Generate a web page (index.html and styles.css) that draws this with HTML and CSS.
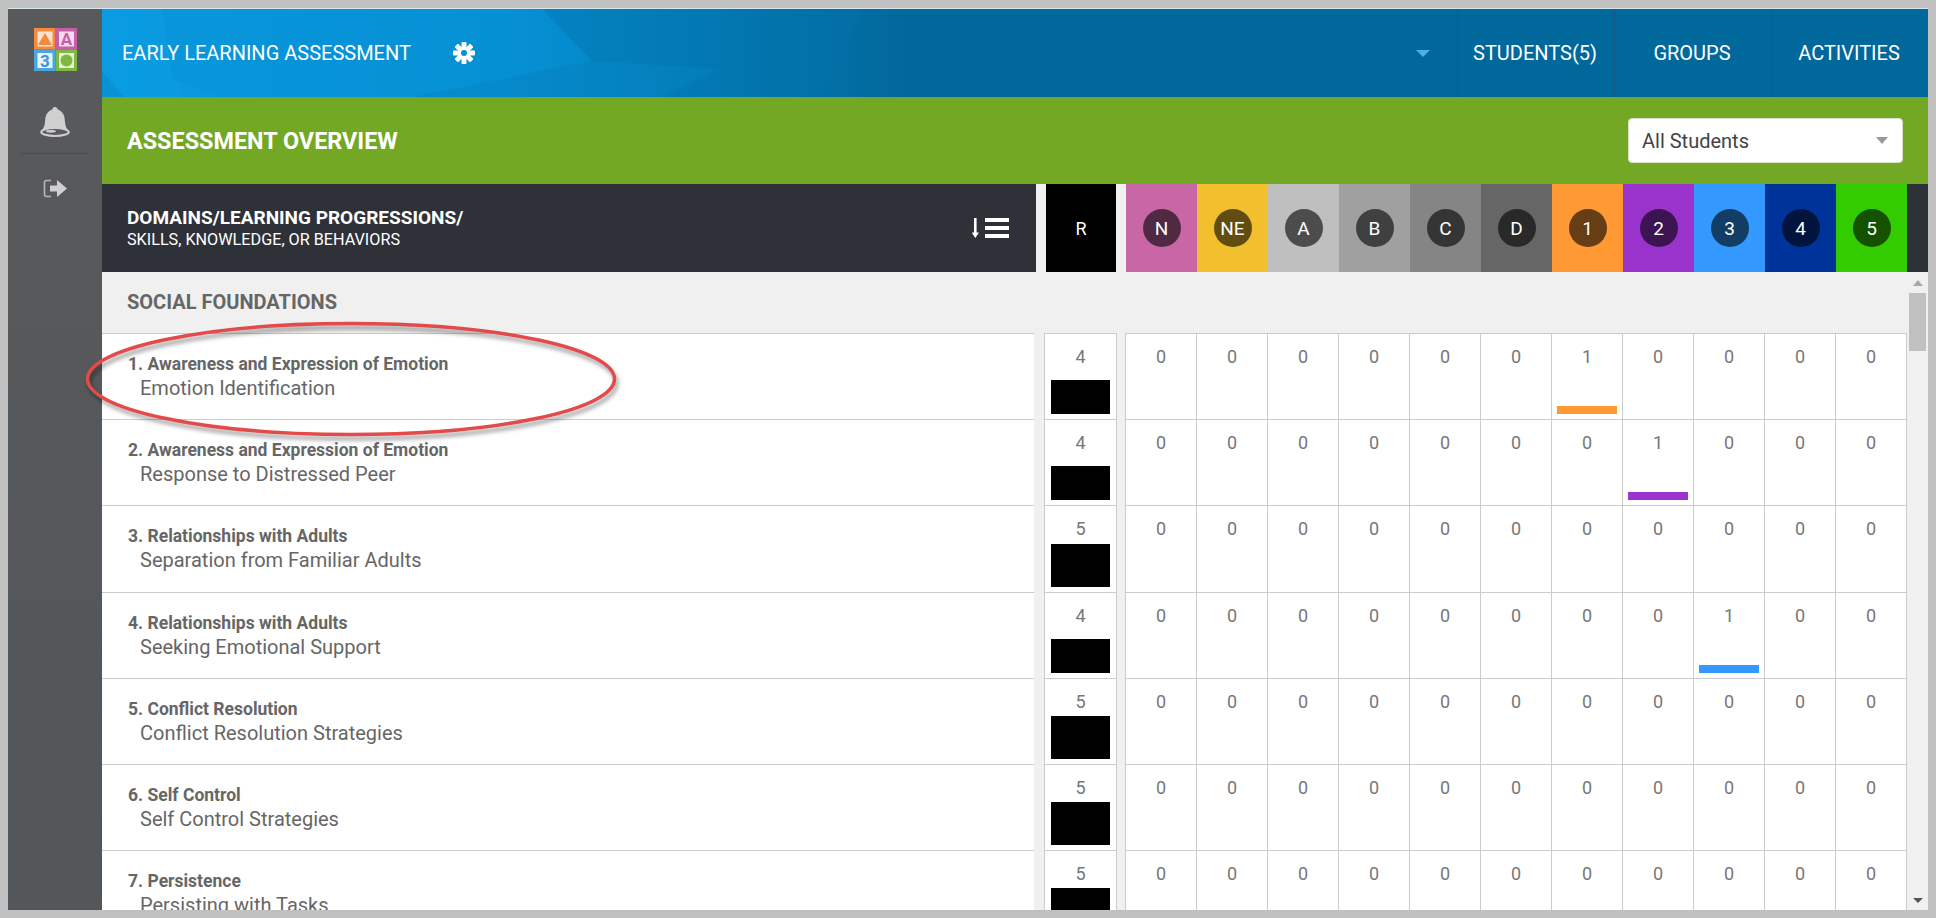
FILE: index.html
```html
<!DOCTYPE html>
<html lang="en">
<head>
    <meta charset="UTF-8">
    <meta name="viewport" content="width=device-width, initial-scale=1.0">
    <title>Early Learning Assessment</title>
    <link rel="stylesheet" href="styles.css">
</head>
<body>
    <div class="frame">
        <!-- Left rail -->
        <aside class="sidebar">
            <svg class="logo" viewBox="0 0 43 43">
                <rect x="0" y="0" width="21.5" height="21.5" fill="#f58a3f"/>
                <rect x="21.5" y="0" width="21.5" height="21.5" fill="#c65fa8"/>
                <rect x="0" y="21.5" width="21.5" height="21.5" fill="#4ba6de"/>
                <rect x="21.5" y="21.5" width="21.5" height="21.5" fill="#7eb843"/>
                <rect x="3.5" y="3.5" width="15" height="15" fill="#fbe3d2"/>
                <rect x="25" y="3.5" width="15" height="15" fill="#f4dcee"/>
                <rect x="3.5" y="25" width="15" height="15" fill="#e6f3fb"/>
                <rect x="25" y="25" width="15" height="15" fill="#e4f0d4"/>
                <polygon points="11,5 18,17 4,17" fill="#f58a3f"/>
                <text x="32.5" y="17" class="logo-letter" fill="#c65fa8">A</text>
                <text x="11" y="38.5" class="logo-letter" fill="#3b97d2">3</text>
                <circle cx="32.5" cy="32.5" r="6" fill="#7eb843"/>
            </svg>
            <svg class="bell" viewBox="0 0 30 30">
                <path d="M15 0c1.600 0 2.600 1 2.600 2.600C22 4 24.500 7.500 24.800 13c.3 5 1.200 8 4 11.500H1.200c2.800-3.500 3.700-6.500 4-11.500C5.500 7.500 8 4 12.400 2.600 12.400 1 13.400 0 15 0z" fill="#cfcfcf"/>
                <ellipse cx="15" cy="25" rx="13.800" ry="4" fill="#5a5c5e" stroke="#cfcfcf" stroke-width="2"/>
                <ellipse cx="11" cy="24.300" rx="5" ry="1.400" fill="#cfcfcf"/>
            </svg>
            <div class="rail-divider"></div>
            <svg class="signout" viewBox="0 0 24 19">
                <path d="M8 1.500H3.500C2.300 1.500 1.500 2.300 1.500 3.500v12c0 1.200.8 2 2 2H8" fill="none" stroke="#b4b6b7" stroke-width="1.600"/>
                <path d="M7 6.500h7V1l10 8.500L14 18v-5.500H7z" fill="#d0d0d0"/>
            </svg>
        </aside>

        <main class="content">
            <!-- Top bar -->
            <header class="topbar">
                <svg class="topbar-facets" viewBox="0 0 1826 88" preserveAspectRatio="none">
                    <polygon points="0,0 74,0 80,88 0,88" fill="#0a9fe6"/>
                    <polygon points="0,62 22,88 0,88" fill="#0786c4"/>
                    <polygon points="190,0 440,0 490,52 300,88 120,88 70,70 60,0" fill="#0792d6"/>
                    <polygon points="310,88 490,52 620,60 560,88" fill="#0581bd"/>
                    <polygon points="440,0 760,0 720,88 560,88 620,60 490,52" fill="#0273aa"/>
                </svg>
                <span class="app-title">EARLY LEARNING ASSESSMENT</span>
                <svg class="gear" viewBox="0 0 22 22">
                    <g fill="#fff">
                        <rect x="8.500" y="0" width="5" height="22" rx="1"/>
                        <rect x="8.500" y="0" width="5" height="22" rx="1" transform="rotate(45 11 11)"/>
                        <rect x="8.500" y="0" width="5" height="22" rx="1" transform="rotate(90 11 11)"/>
                        <rect x="8.500" y="0" width="5" height="22" rx="1" transform="rotate(135 11 11)"/>
                    </g>
                    <circle cx="11" cy="11" r="6" fill="#fff"/>
                    <circle cx="11" cy="11" r="3" fill="#0590d2"/>
                </svg>
                <span class="topbar-caret"></span>
                <nav class="tabs">
                    <a class="tab">STUDENTS(5)</a>
                    <a class="tab">GROUPS</a>
                    <a class="tab">ACTIVITIES</a>
                </nav>
            </header>

            <!-- Page title -->
            <div class="overview">
                <h1>ASSESSMENT OVERVIEW</h1>
                <div class="student-select">
                    <span>All Students</span>
                    <span class="select-caret"></span>
                </div>
            </div>

            <!-- Column headings -->
            <div class="col-head">
                <div class="col-title">
                    <div class="col-title-text">
                        <strong>DOMAINS/LEARNING PROGRESSIONS/</strong>
                        <span>SKILLS, KNOWLEDGE, OR BEHAVIORS</span>
                    </div>
                    <svg class="sort-icon" viewBox="0 0 37 20">
                        <path d="M2 0h2.600v14.500H7L3.300 20-.4 14.500H2z" fill="#fff"/>
                        <rect x="13" y="0" width="24" height="4" fill="#fff"/>
                        <rect x="13" y="8" width="24" height="4" fill="#fff"/>
                        <rect x="13" y="16" width="24" height="4" fill="#fff"/>
                    </svg>
                </div>
                <div class="col-r">R</div>
                <div class="levels">
                    <div class="level lv-n"><span>N</span></div>
                    <div class="level lv-ne"><span>NE</span></div>
                    <div class="level lv-a"><span>A</span></div>
                    <div class="level lv-b"><span>B</span></div>
                    <div class="level lv-c"><span>C</span></div>
                    <div class="level lv-d"><span>D</span></div>
                    <div class="level lv-1"><span>1</span></div>
                    <div class="level lv-2"><span>2</span></div>
                    <div class="level lv-3"><span>3</span></div>
                    <div class="level lv-4"><span>4</span></div>
                    <div class="level lv-5"><span>5</span></div>
                </div>
                <div class="col-end"></div>
            </div>

            <div class="table-wrap">
                <div class="table">
                    <div class="section">SOCIAL FOUNDATIONS</div>

                    <div class="row">
                        <div class="skill"><b>1. Awareness and Expression of Emotion</b><p>Emotion Identification</p></div>
                        <div class="rating">4<i style="height:34px"></i></div>
                        <div class="cells">
                            <div>0</div><div>0</div><div>0</div><div>0</div><div>0</div><div>0</div>
                            <div>1<i class="bar-1"></i></div><div>0</div><div>0</div><div>0</div><div>0</div>
                        </div>
                    </div>

                    <div class="row">
                        <div class="skill"><b>2. Awareness and Expression of Emotion</b><p>Response to Distressed Peer</p></div>
                        <div class="rating">4<i style="height:34px"></i></div>
                        <div class="cells">
                            <div>0</div><div>0</div><div>0</div><div>0</div><div>0</div><div>0</div>
                            <div>0</div><div>1<i class="bar-2"></i></div><div>0</div><div>0</div><div>0</div>
                        </div>
                    </div>

                    <div class="row row-tall">
                        <div class="skill"><b>3. Relationships with Adults</b><p>Separation from Familiar Adults</p></div>
                        <div class="rating">5<i style="height:43px"></i></div>
                        <div class="cells">
                            <div>0</div><div>0</div><div>0</div><div>0</div><div>0</div><div>0</div>
                            <div>0</div><div>0</div><div>0</div><div>0</div><div>0</div>
                        </div>
                    </div>

                    <div class="row">
                        <div class="skill"><b>4. Relationships with Adults</b><p>Seeking Emotional Support</p></div>
                        <div class="rating">4<i style="height:34px"></i></div>
                        <div class="cells">
                            <div>0</div><div>0</div><div>0</div><div>0</div><div>0</div><div>0</div>
                            <div>0</div><div>0</div><div>1<i class="bar-3"></i></div><div>0</div><div>0</div>
                        </div>
                    </div>

                    <div class="row">
                        <div class="skill"><b>5. Conflict Resolution</b><p>Conflict Resolution Strategies</p></div>
                        <div class="rating">5<i style="height:43px"></i></div>
                        <div class="cells">
                            <div>0</div><div>0</div><div>0</div><div>0</div><div>0</div><div>0</div>
                            <div>0</div><div>0</div><div>0</div><div>0</div><div>0</div>
                        </div>
                    </div>

                    <div class="row">
                        <div class="skill"><b>6. Self Control</b><p>Self Control Strategies</p></div>
                        <div class="rating">5<i style="height:43px"></i></div>
                        <div class="cells">
                            <div>0</div><div>0</div><div>0</div><div>0</div><div>0</div><div>0</div>
                            <div>0</div><div>0</div><div>0</div><div>0</div><div>0</div>
                        </div>
                    </div>

                    <div class="row">
                        <div class="skill"><b>7. Persistence</b><p>Persisting with Tasks</p></div>
                        <div class="rating">5<i style="height:43px"></i></div>
                        <div class="cells">
                            <div>0</div><div>0</div><div>0</div><div>0</div><div>0</div><div>0</div>
                            <div>0</div><div>0</div><div>0</div><div>0</div><div>0</div>
                        </div>
                    </div>
                </div>

                <div class="scrollbar">
                    <span class="arrow-up"></span>
                    <span class="thumb"></span>
                    <span class="arrow-down"></span>
                </div>
            </div>
        </main>

        <!-- Red annotation drawn over the first row -->
        <svg class="annotation" viewBox="0 0 540 124">
            <ellipse cx="267" cy="58" rx="263.500" ry="55.500" fill="none" stroke="#e34a4a" stroke-width="3.500"/>
        </svg>
    </div>
</body>
</html>
```

FILE: styles.css
```css
:root {
    --line: #cccccc;
    --panel: #f0f0f0;
    --text: #666666;
}

html, body {
    height: 100%;
}

body {
    margin: 8px;
    background: #c0c0c0;
    font-family: Roboto, "Liberation Sans", sans-serif;
    overflow: hidden;
}

.frame {
    position: relative;
    display: flex;
    width: 1920px;
    height: 902px;
    border-top: 1px solid #d6e8ef;
    box-sizing: border-box;
    overflow: hidden;
}

/* Left rail */
.sidebar {
    flex: 0 0 94px;
    display: flex;
    flex-direction: column;
    align-items: center;
    padding-top: 19px;
    background: linear-gradient(#58595b, #53575a);
}

.logo {
    width: 43px;
    height: 43px;
    margin-bottom: 36px;
    margin-left: 1px;
}

.logo-letter {
    font-size: 17px;
    font-weight: 700;
    text-anchor: middle;
}

.bell {
    width: 30px;
    height: 30px;
    margin-bottom: 16px;
}

.rail-divider {
    width: 68px;
    height: 1px;
    margin-bottom: 25px;
    background: #4a4d4f;
}

.signout {
    width: 24px;
    height: 19px;
}

.content {
    flex: 1;
    display: flex;
    flex-direction: column;
    min-width: 0;
}

/* Top bar */
.topbar {
    position: relative;
    flex: 0 0 88px;
    display: flex;
    align-items: center;
    padding-left: 20px;
    color: #fff;
    background: linear-gradient(90deg, #0a9ae0 0, #0690d4 400px, #01689c 800px);
}

.topbar-facets {
    position: absolute;
    left: 0;
    top: 0;
    width: 100%;
    height: 100%;
    opacity: 0.35;
}

.app-title {
    position: relative;
    font-size: 20px;
}

.gear {
    position: relative;
    width: 22px;
    height: 22px;
    margin-left: 42px;
}

.topbar-caret {
    position: relative;
    margin-left: auto;
    margin-right: 27px;
    border-top: 7px solid #4ab0e4;
    border-left: 7.5px solid transparent;
    border-right: 7.5px solid transparent;
}

.tabs {
    position: relative;
    display: flex;
    height: 100%;
}

.tab {
    display: flex;
    align-items: center;
    justify-content: center;
    width: 157px;
    padding-right: 2px;
    font-size: 20px;
    border-left: 1px solid #155a84;
    box-sizing: border-box;
}

/* Page title */
.overview {
    flex: 0 0 87px;
    display: flex;
    align-items: center;
    justify-content: space-between;
    padding: 0 25px 0 25px;
    background: #72a823;
    box-sizing: border-box;
}

.overview h1 {
    margin: 0;
    color: #fff;
    font-size: 23.4px;
    font-weight: 700;
}

.student-select {
    display: flex;
    align-items: center;
    justify-content: space-between;
    width: 275px;
    height: 45px;
    padding: 0 14px 0 13px;
    box-sizing: border-box;
    background: #fff;
    border: 1px solid #d8e2c8;
    border-radius: 4px;
    color: #444;
    font-size: 20px;
}

.select-caret {
    border-top: 7px solid #999;
    border-left: 6px solid transparent;
    border-right: 6px solid transparent;
}

/* Column headings */
.col-head {
    flex: 0 0 88px;
    display: flex;
    background: var(--panel);
}

.col-title {
    flex: 0 0 934px;
    display: flex;
    align-items: center;
    justify-content: space-between;
    padding: 0 27px 0 25px;
    box-sizing: border-box;
    background: #2e3138;
    color: #fff;
}

.col-title-text {
    display: flex;
    flex-direction: column;
}

.col-title-text strong {
    font-size: 19px;
    line-height: 24px;
}

.col-title-text span {
    font-size: 16.2px;
    line-height: 20px;
}

.sort-icon {
    width: 37px;
    height: 20px;
}

.col-r {
    flex: 0 0 70px;
    margin: 0 10px;
    display: flex;
    align-items: center;
    justify-content: center;
    background: #000;
    color: #fff;
    font-size: 18px;
}

.levels {
    display: grid;
    grid-template-columns: repeat(11, 71px);
}

.col-end {
    flex: 1;
    background: #2e3138;
}

.level {
    display: flex;
    align-items: center;
    justify-content: center;
}

.level span {
    display: flex;
    align-items: center;
    justify-content: center;
    width: 38px;
    height: 38px;
    border-radius: 50%;
    background: rgba(0, 0, 0, 0.6);
    color: #fff;
    font-size: 19px;
}

.lv-n { background: #c966a6; }
.lv-ne { background: #f2c02e; }
.lv-a { background: #bfbfbf; }
.lv-b { background: #a0a0a0; }
.lv-c { background: #858585; }
.lv-d { background: #666666; }
.lv-1 { background: #ff9933; }
.lv-2 { background: #9933cc; }
.lv-3 { background: #3399ff; }
.lv-4 { background: #003399; }
.lv-5 { background: #33cc00; }

/* Table */
.table-wrap {
    flex: 1;
    display: flex;
    min-height: 0;
    background: var(--panel);
}

.table {
    flex: 0 0 1805px;
    overflow: hidden;
}

.section {
    height: 61px;
    padding-left: 25px;
    line-height: 61px;
    color: var(--text);
    font-size: 20px;
    font-weight: 700;
}

.row {
    display: flex;
    height: 86px;
    color: var(--text);
}

.row-tall {
    height: 87px;
}

.skill {
    flex: 0 0 932px;
    margin-right: 10px;
    padding: 18px 0 0 26px;
    box-sizing: border-box;
    background: #fff;
    border-top: 1px solid var(--line);
    font-size: 17.5px;
    line-height: 24px;
}

.skill b {
    font-weight: 700;
}

.skill p {
    margin: 0 0 0 12px;
    font-size: 20px;
    line-height: 25px;
}

.rating {
    flex: 0 0 73px;
    margin-right: 8px;
    display: flex;
    flex-direction: column;
    padding-top: 12px;
    box-sizing: border-box;
    background: #fff;
    border: solid var(--line);
    border-width: 1px 1px 0;
    color: #777;
    font-size: 18px;
    line-height: 22px;
    text-align: center;
}

.rating i {
    margin: auto 6px 5px 6px;
    background: #000;
}

.cells {
    display: grid;
    grid-template-columns: repeat(11, 71px);
    background: #fff;
    border-right: 1px solid var(--line);
    border-top: 1px solid var(--line);
    box-sizing: content-box;
    flex: 0 0 781px;
    height: calc(100% - 1px);
}

.cells div {
    display: flex;
    flex-direction: column;
    padding-top: 12px;
    box-sizing: border-box;
    border-left: 1px solid var(--line);
    color: #777;
    font-size: 18px;
    line-height: 22px;
    text-align: center;
}

.cells i {
    height: 8px;
    margin: auto 5px 5px;
}

.bar-1 { background: #ff9933; }
.bar-2 { background: #9933cc; }
.bar-3 { background: #3399ff; }

/* Scrollbar */
.scrollbar {
    position: relative;
    flex: 1;
    display: flex;
    flex-direction: column;
    align-items: center;
    padding-top: 8px;
}

.arrow-up {
    border-bottom: 6px solid #a8a8a8;
    border-left: 5px solid transparent;
    border-right: 5px solid transparent;
    margin-bottom: 7px;
}

.thumb {
    width: 17px;
    height: 58px;
    background: #c0c0c0;
}

.arrow-down {
    margin-top: auto;
    margin-bottom: 7px;
    border-top: 5px solid #555;
    border-left: 5px solid transparent;
    border-right: 5px solid transparent;
}

/* Annotation */
.annotation {
    position: absolute;
    left: 76px;
    top: 312px;
    width: 540px;
    height: 124px;
    filter: drop-shadow(2px 4px 2px rgba(0, 0, 0, 0.4));
    pointer-events: none;
}
```
